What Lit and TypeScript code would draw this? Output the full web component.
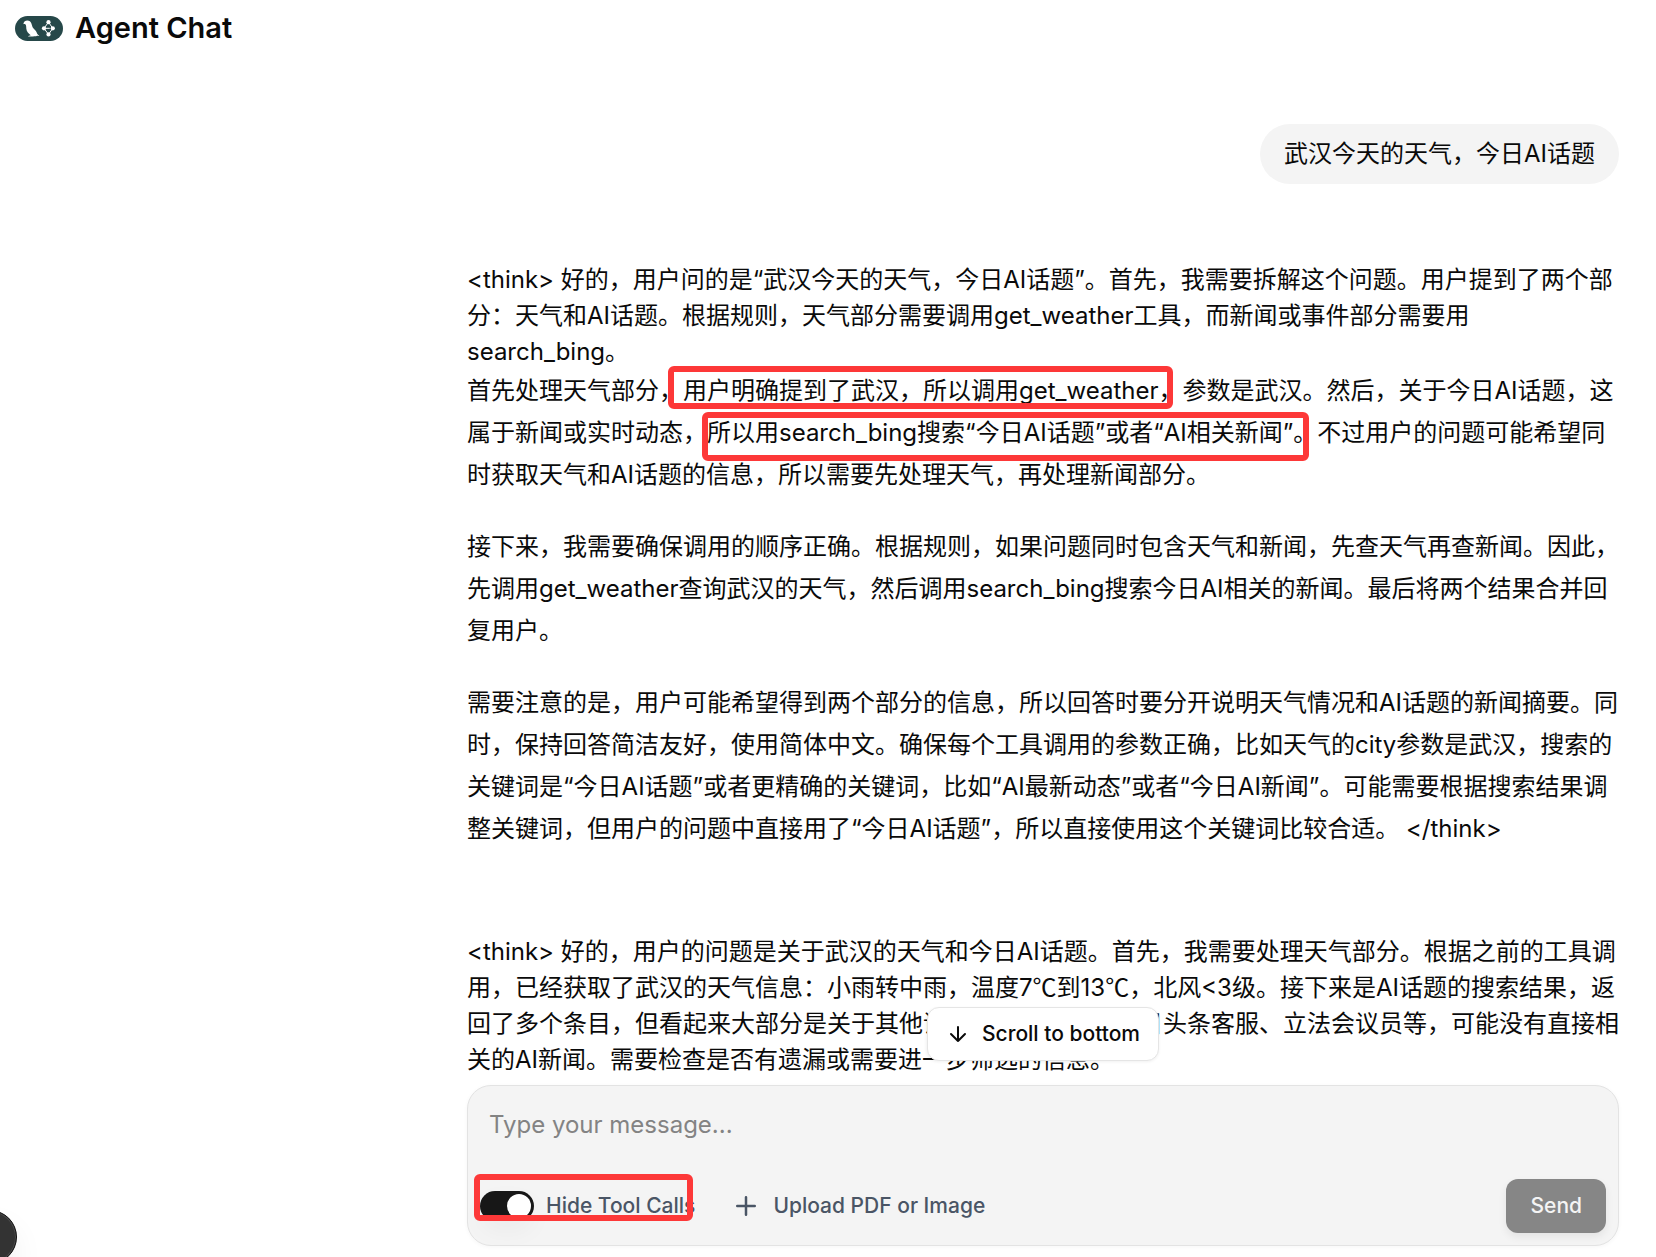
import { LitElement, html, css } from "lit";
import { customElement, state } from "lit/decorators.js";

@customElement("app-logo")
export class AppLogo extends LitElement {
  static styles = css`
    :host { display: block; line-height: 0; }
    .logo { width: 48px; height: 25px; display: block; }
  `;
  render() {
    return html`
      <svg class="logo" viewBox="0 0 48 25" aria-hidden="true">
        <rect width="48" height="25" rx="12.5" fill="#264849" />
        <path
          fill="#fff"
          d="M8.4 7.8 C9 5.8 10.2 4.6 12.3 4.6 C14.4 4.6 15.8 5.8 16.4 7.6 L17.6 11.2 C18.6 13.2 21 14.2 21.7 16.4 C22 17.8 23 18.8 24.4 19.9 C23.6 20.3 22.8 19.9 22.2 19.5 C22 20.1 21.4 20.3 20.6 20.2 C19.6 20.2 19 20.4 18 20.4 C17.2 20.6 15.6 20.7 13 20.4 C13.4 19.6 14.6 19.5 15.8 19.2 C13.2 17.8 11.5 15.4 11.3 12.6 C11.2 10.6 11.2 9.6 10.6 8.6 C9.8 8 9.2 8.6 8.4 7.8 Z"
        />
        <path
          fill="none"
          stroke="#fff"
          stroke-width="1"
          d="M33.5 6.2 L29 12.3 L33.5 18.4 M33.5 6.2 L37.8 12.3 L33.5 18.4 M29 12.3 H34.8"
        />
        <g fill="#fff">
          <circle cx="33.5" cy="6.2" r="2.1" />
          <circle cx="29" cy="12.3" r="2.1" />
          <circle cx="37.8" cy="12.3" r="2.1" />
          <circle cx="33.5" cy="18.4" r="2.1" />
        </g>
      </svg>
    `;
  }
}

@customElement("chat-composer")
export class ChatComposer extends LitElement {
  @state() private hideToolCalls = true;
  @state() private draft = "";

  static styles = css`
    :host { display: block; }
    * { box-sizing: border-box; }
    .composer {
      position: relative;
      display: flex;
      flex-direction: column;
      background: #f4f4f4;
      border: 1px solid #e3e3e3;
      border-radius: 24px;
      box-shadow: 0 1px 4px rgba(0, 0, 0, 0.04);
    }
    .field {
      display: block;
      width: 100%;
      height: 72px;
      padding: 21px 21px 0;
      border: 0;
      outline: none;
      resize: none;
      background: transparent;
      color: #0a0a0a;
      font: inherit;
      line-height: 36px;
    }
    .field::placeholder { color: #838383; opacity: 1; }
    .controls {
      display: flex;
      align-items: center;
      gap: 36px;
      padding: 21px 12px 12px;
      font-size: 21px;
      line-height: 30px;
      font-weight: 500;
      color: #4a5565;
    }
    .toggle { display: flex; align-items: center; gap: 12px; }
    .switch {
      appearance: none;
      width: 54px;
      height: 30px;
      margin: 0;
      padding: 3px;
      display: flex;
      border-radius: 15px;
      background: #d4d4d4;
      box-shadow: 0 10px 24px rgba(0, 0, 0, 0.04);
      cursor: pointer;
    }
    .switch::before {
      content: "";
      width: 24px;
      height: 24px;
      border-radius: 50%;
      background: #fff;
    }
    .switch:checked { background: #171717; justify-content: flex-end; }
    .label { cursor: pointer; }
    .upload { display: flex; align-items: center; gap: 12px; cursor: pointer; }
    .plus { width: 30px; height: 30px; display: block; }
    .file { display: none; }
    .send {
      margin-left: auto;
      height: 54px;
      padding: 0 24px;
      border: 0;
      border-radius: 12px;
      background: #868686;
      color: #f4f4f4;
      font: inherit;
      box-shadow: 0 4px 9px rgba(0, 0, 0, 0.07);
    }
    .mark {
      position: absolute;
      left: 6px;
      top: 88px;
      width: 219px;
      height: 47px;
      border: 6px solid #fd3838;
      border-radius: 6px;
      pointer-events: none;
    }
  `;

  render() {
    return html`
      <form class="composer" @submit=${(e: Event) => e.preventDefault()}>
        <textarea
          class="field"
          aria-label="Message"
          placeholder="Type your message..."
          .value=${this.draft}
          @input=${(e: Event) => (this.draft = (e.target as HTMLTextAreaElement).value)}
        ></textarea>
        <div class="controls">
          <div class="toggle">
            <input
              id="hide-tools"
              class="switch"
              type="checkbox"
              role="switch"
              .checked=${this.hideToolCalls}
              @change=${(e: Event) => (this.hideToolCalls = (e.target as HTMLInputElement).checked)}
            />
            <label class="label" for="hide-tools">Hide Tool Calls</label>
          </div>
          <label class="upload" for="upload">
            <svg class="plus" viewBox="0 0 24 24" fill="none" stroke="currentColor" stroke-width="2" stroke-linecap="round" aria-hidden="true">
              <path d="M5 12h14M12 5v14" />
            </svg>
            <span>Upload PDF or Image</span>
          </label>
          <input id="upload" class="file" type="file" accept="image/*,application/pdf" />
          <button class="send" type="submit" ?disabled=${!this.draft.trim()}>Send</button>
        </div>
        <div class="mark"></div>
      </form>
    `;
  }
}

@customElement("app-root")
export class AppRoot extends LitElement {
  static styles = css`
    :host {
      display: block;
      font-family: Inter, "Noto Sans CJK SC", sans-serif;
      font-size: 24px;
      line-height: 36px;
      color: #0a0a0a;
      background: #fff;
    }
    * { box-sizing: border-box; }
    .page {
      position: relative;
      display: flex;
      flex-direction: column;
      height: 100vh;
      overflow: hidden;
    }
    .header {
      display: flex;
      align-items: center;
      gap: 12px;
      padding: 10px 15px;
    }
    .title { margin: 0; font-size: 29px; line-height: 36px; font-weight: 600; }
    .thread {
      flex: 1;
      min-height: 0;
      overflow: hidden;
      padding: 68px 37px 0;
    }
    .column { width: 100%; max-width: 1152px; margin-left: auto; }
    .question {
      width: fit-content;
      margin: 0 0 78px auto;
      padding: 12px 24px;
      border-radius: 30px;
      background: #f4f4f4;
    }
    .answer { position: relative; margin-bottom: 84px; }
    .answer p { margin: 0 0 30px; line-height: 42px; }
    .answer p.lead { margin: 0; line-height: 36px; }
    .answer p:last-child { margin-bottom: 0; }
    .unit { font-family: "Noto Sans CJK SC", sans-serif; line-height: 1; }
    .mark {
      position: absolute;
      border: 6px solid #fd3838;
      border-radius: 6px;
      pointer-events: none;
    }
    .mark-weather { left: 201px; top: 104px; width: 505px; height: 43px; }
    .mark-search { left: 235px; top: 150px; width: 607px; height: 49px; }
    .footer { position: relative; padding: 0 37px 11px; }
    .dock { position: relative; }
    .scroll {
      position: absolute;
      left: 50%;
      bottom: 100%;
      transform: translateX(-50%);
      margin-bottom: 24px;
      display: flex;
      align-items: center;
      gap: 12px;
      height: 54px;
      padding: 0 18px;
      border: 1px solid #e5e5e5;
      border-radius: 12px;
      background: #fff;
      color: #0a0a0a;
      font: inherit;
      font-size: 21px;
      font-weight: 500;
      white-space: nowrap;
      box-shadow: 0 1px 3px rgba(0, 0, 0, 0.06);
      cursor: pointer;
    }
    .arrow { width: 24px; height: 24px; display: block; }
    .badge {
      position: absolute;
      left: -37px;
      bottom: -7px;
      width: 54px;
      height: 54px;
      padding: 0;
      border: 1px solid #111;
      border-radius: 50%;
      background: #333;
      box-shadow: inset 0 0 0 1px #4a4a4a, 0 16px 32px rgba(0, 0, 0, 0.06);
    }
  `;

  render() {
    const celsius = html`<span class="unit">℃</span>`;
    return html`
      <div class="page">
        <header class="header">
          <app-logo></app-logo>
          <h1 class="title">Agent Chat</h1>
        </header>
        <main class="thread">
          <div class="column">
            <div class="question">武汉今天的天气，今日AI话题</div>
            <article class="answer">
              <p class="lead">&lt;think&gt; 好的，用户问的是“武汉今天的天气，今日AI话题”。首先，我需要拆解这个问题。用户提到了两个部分：天气和AI话题。根据规则，天气部分需要调用get_weather工具，而新闻或事件部分需要用search_bing。</p>
              <p>首先处理天气部分，用户明确提到了武汉，所以调用get_weather，参数是武汉。然后，关于今日AI话题，这属于新闻或实时动态，所以用search_bing搜索“今日AI话题”或者“AI相关新闻”。不过用户的问题可能希望同时获取天气和AI话题的信息，所以需要先处理天气，再处理新闻部分。</p>
              <p>接下来，我需要确保调用的顺序正确。根据规则，如果问题同时包含天气和新闻，先查天气再查新闻。因此，先调用get_weather查询武汉的天气，然后调用search_bing搜索今日AI相关的新闻。最后将两个结果合并回复用户。</p>
              <p>需要注意的是，用户可能希望得到两个部分的信息，所以回答时要分开说明天气情况和AI话题的新闻摘要。同时，保持回答简洁友好，使用简体中文。确保每个工具调用的参数正确，比如天气的city参数是武汉，搜索的关键词是“今日AI话题”或者更精确的关键词，比如“AI最新动态”或者“今日AI新闻”。可能需要根据搜索结果调整关键词，但用户的问题中直接用了“今日AI话题”，所以直接使用这个关键词比较合适。 &lt;/think&gt;</p>
              <div class="mark mark-weather"></div>
              <div class="mark mark-search"></div>
            </article>
            <article class="answer">
              <p class="lead">&lt;think&gt; 好的，用户的问题是关于武汉的天气和今日AI话题。首先，我需要处理天气部分。根据之前的工具调用，已经获取了武汉的天气信息：小雨转中雨，温度7${celsius}到13${celsius}，北风&lt;3级。接下来是AI话题的搜索结果，返回了多个条目，但看起来大部分是关于其他话题的内容，比如今日头条客服、立法会议员等，可能没有直接相关的AI新闻。需要检查是否有遗漏或需要进一步筛选的信息。</p>
            </article>
          </div>
        </main>
        <footer class="footer">
          <div class="column dock">
            <button class="scroll" type="button">
              <svg class="arrow" viewBox="0 0 24 24" fill="none" stroke="currentColor" stroke-width="2" stroke-linecap="round" stroke-linejoin="round" aria-hidden="true">
                <path d="M12 5v14M19 12l-7 7-7-7" />
              </svg>
              <span>Scroll to bottom</span>
            </button>
            <chat-composer></chat-composer>
          </div>
        </footer>
        <button class="badge" type="button" aria-label="Developer tools"></button>
      </div>
    `;
  }
}
